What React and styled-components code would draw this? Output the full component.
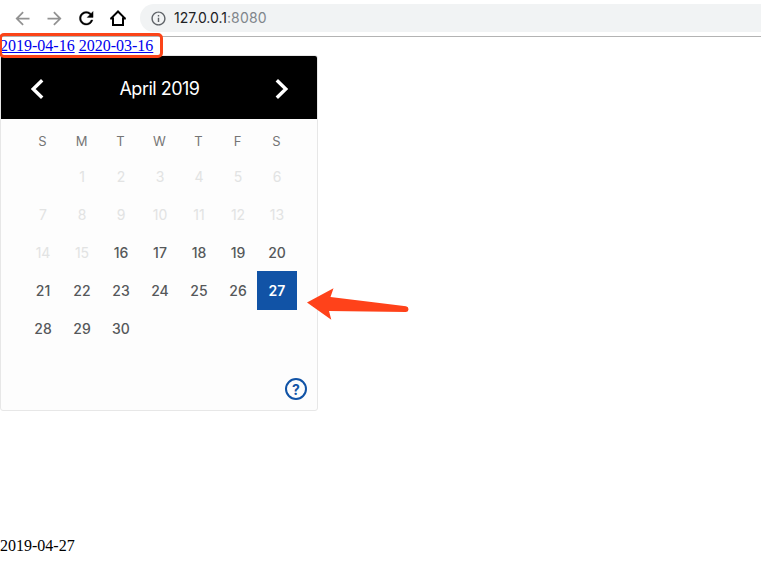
import React from "react";
import styled, { createGlobalStyle } from "styled-components";

const GlobalStyle = createGlobalStyle`
  * { box-sizing: border-box; }
  body { margin: 0; background: #fff; overflow: hidden; }
`;

const Page = styled.main`
  position: relative;
  height: 568px;
  font: 16px/18px "Liberation Serif", serif;
  color: #000;
`;

const Toolbar = styled.header`
  display: flex;
  align-items: center;
  height: 37px;
  padding: 0 0 0 11.5px;
  border-bottom: 1px solid #b3b3b3;
`;

const NavButton = styled.span`
  display: flex;
  flex: none;
  width: 32px;
  height: 36px;
  align-items: center;
  color: ${(p) => (p.$disabled ? "#929292" : "#000")};
  svg { display: block; flex: none; }
`;

const AddressBar = styled.div`
  display: flex;
  align-items: center;
  flex: 1;
  height: 28px;
  margin-left: 0.5px;
  padding-left: 10px;
  border-radius: 14px 0 0 14px;
  background: #f1f3f4;
  font: 14px/28px Inter, sans-serif;
  color: #80868b;
  svg { display: block; margin-right: 7px; }
`;

const Url = styled.span`
  display: flex;
`;

const Host = styled.span`
  color: #202124;
  letter-spacing: -0.04px;
`;

const Port = styled.span`
  letter-spacing: 0.2px;
`;

const Links = styled.nav`
  display: flex;
  gap: 4px;
  height: 18px;
`;

const DateLink = styled.a`
  color: #0000ee;
  text-decoration: underline;
`;

const Calendar = styled.section`
  width: 318px;
  height: 356px;
  border: 1px solid #e7e7e7;
  border-radius: 3px;
  background: #fdfdfd;
  overflow: hidden;
  font-family: Inter, sans-serif;
`;

const MonthBar = styled.div`
  display: flex;
  align-items: center;
  justify-content: space-between;
  height: 63px;
  padding: 3px 26.5px 0 27.5px;
  background: #000;
  color: #fff;
  svg { display: block; }
`;

const MonthTitle = styled.h1`
  margin: 0;
  font-size: 18px;
  font-weight: 400;
  line-height: 24px;
  letter-spacing: -0.5px;
`;

const Week = styled.div`
  display: grid;
  grid-template-columns: repeat(7, 39px);
  height: 38px;
  padding-left: 22px;
`;

const Weekday = styled.span`
  width: 39px;
  padding-top: 13px;
  text-align: center;
  font-size: 13px;
  line-height: 18px;
  color: #757575;
`;

const Day = styled.span`
  width: 40px;
  height: 39px;
  line-height: 40px;
  text-align: center;
  font-size: 14px;
  font-weight: ${(p) => (p.$selected ? 600 : p.$past ? 400 : 500)};
  color: ${(p) => (p.$selected ? "#fff" : p.$past ? "#e2e3e3" : "#55585a")};
  background: ${(p) => (p.$selected ? "#1153a6" : "transparent")};
`;

const Footer = styled.div`
  display: flex;
  justify-content: flex-end;
  padding: 31px 10px 0 0;
`;

const HelpButton = styled.span`
  width: 22px;
  height: 22px;
  border: 2px solid #1153a6;
  border-radius: 50%;
  color: #1153a6;
  font: 700 14px/19px Inter, sans-serif;
  text-align: center;
`;

const Result = styled.p`
  margin: 126px 0 0;
`;

const LinkMarker = styled.div`
  position: absolute;
  left: -1px;
  top: 33px;
  width: 164px;
  height: 25px;
  border: 3px solid #fb4418;
  border-radius: 5px;
`;

const Pointer = styled.svg`
  position: absolute;
  left: 305px;
  top: 286px;
`;

const materialPaths = {
  back: "M20 11H7.83l5.59-5.59L12 4l-8 8 8 8 1.41-1.41L7.83 13H20v-2z",
  forward: "M12 4l-1.41 1.41L16.17 11H4v2h12.17l-5.58 5.59L12 20l8-8z",
  reload:
    "M17.65 6.35C16.2 4.9 14.21 4 12 4c-4.42 0-7.99 3.58-7.99 8s3.57 8 7.99 8c3.73 0 6.84-2.55 7.73-6h-2.08c-.82 2.33-3.04 4-5.65 4-3.31 0-6-2.69-6-6s2.69-6 6-6c1.66 0 3.14.69 4.22 1.78L13 11h7V4l-2.35 2.35z",
  info: "M11 7h2v2h-2zm0 4h2v6h-2zm1-9C6.48 2 2 6.48 2 12s4.48 10 10 10 10-4.48 10-10S17.52 2 12 2zm0 18c-4.41 0-8-3.59-8-8s3.59-8 8-8 8 3.59 8 8-3.59 8-8 8z",
};

const Icon = ({ name, size, color = "currentColor", stroke = 0 }) => (
  <svg width={size} height={size} viewBox="0 0 24 24" fill={color} stroke={color} strokeWidth={stroke}>
    <path d={materialPaths[name]} />
  </svg>
);

const HomeIcon = () => (
  <svg width="20" height="20" viewBox="0 0 20 20" fill="none" stroke="currentColor" strokeWidth="2">
    <path d="M2.6 10.9 10 3.5l7.4 7.4M2.2 10.4H5V17h10v-6.600h2.800" />
  </svg>
);

const Chevron = ({ d }) => (
  <svg width="16" height="22" viewBox="0 0 16 22" fill="none" stroke="#fff" strokeWidth="3.4">
    <path d={d} />
  </svg>
);

const weekdays = ["S", "M", "T", "W", "T", "F", "S"];
const weeks = Array.from({ length: 5 }, (_, w) =>
  Array.from({ length: 7 }, (_, d) => {
    const n = w * 7 + d;
    return n > 0 && n <= 30 ? n : null;
  })
);

export default function App() {
  return (
    <Page>
      <GlobalStyle />
      <Toolbar>
        <NavButton $disabled><Icon name="back" size={21} /></NavButton>
        <NavButton $disabled><Icon name="forward" size={21} /></NavButton>
        <NavButton><Icon name="reload" size={20.5} stroke={0.4} /></NavButton>
        <NavButton><HomeIcon /></NavButton>
        <AddressBar>
          <Icon name="info" size={17} color="#5f6368" />
          <Url><Host>127.0.0.1</Host><Port>:8080</Port></Url>
        </AddressBar>
      </Toolbar>
      <Links>
        <DateLink href="#2019-04-16">2019-04-16</DateLink>
        <DateLink href="#2020-03-16">2020-03-16</DateLink>
      </Links>
      <Calendar>
        <MonthBar>
          <Chevron d="M13.2 2.200 4.200 11l9 8.800" />
          <MonthTitle>April 2019</MonthTitle>
          <Chevron d="M2.800 2.200 11.800 11l-9 8.800" />
        </MonthBar>
        <Week>
          {weekdays.map((name, i) => <Weekday key={i}>{name}</Weekday>)}
        </Week>
        {weeks.map((week, w) => (
          <Week key={w}>
            {week.map((n, d) => (
              <Day key={d} $past={n < 16} $selected={n === 27}>{n}</Day>
            ))}
          </Week>
        ))}
        <Footer><HelpButton>?</HelpButton></Footer>
      </Calendar>
      <Result>2019-04-27</Result>
      <LinkMarker />
      <Pointer width="106" height="36" viewBox="0 0 106 36" fill="#ff421a">
        <path d="M2 16.500 28.500 2.200 25.500 11 101 20.200q2.500.6 2.500 3t-2.500 2.800L24 25l2.300 8.700z" />
      </Pointer>
    </Page>
  );
}
